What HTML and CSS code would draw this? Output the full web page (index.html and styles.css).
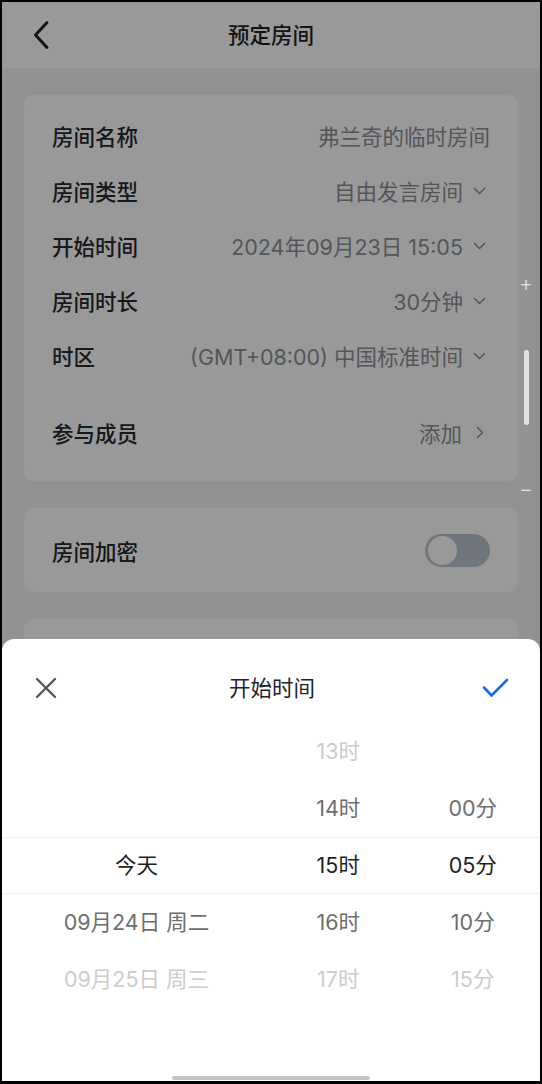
FILE: index.html
```html
<!DOCTYPE html>
<html lang="zh-CN">
<head>
  <meta charset="UTF-8">
  <meta name="viewport" content="width=device-width, initial-scale=1.0">
  <title>预定房间</title>
  <link rel="stylesheet" href="styles.css">
</head>
<body>
<div class="screen">
  <div class="page">
    <div class="nav">
      <svg class="back" width="18" height="30" viewBox="0 0 18 30"><path d="M15 2.5 L3.5 15 L15 27.5" fill="none" stroke="#1f2329" stroke-width="3" stroke-linecap="round" stroke-linejoin="round"/></svg>
      <div class="nav-title">预定房间</div>
    </div>

    <div class="content">
      <div class="card">
        <div class="row">
          <span class="label">房间名称</span>
          <span class="value">弗兰奇的临时房间</span>
        </div>
        <div class="row">
          <span class="label">房间类型</span>
          <span class="value">自由发言房间</span>
          <svg class="down" width="13" height="8" viewBox="0 0 13 8"><path d="M1.5 1.5 L6.5 6.5 L11.5 1.5" fill="none" stroke="#8f9299" stroke-width="1.6" stroke-linecap="round" stroke-linejoin="round"/></svg>
        </div>
        <div class="row">
          <span class="label">开始时间</span>
          <span class="value">2024年09月23日 15:05</span>
          <svg class="down" width="13" height="8" viewBox="0 0 13 8"><path d="M1.5 1.5 L6.5 6.5 L11.5 1.5" fill="none" stroke="#8f9299" stroke-width="1.6" stroke-linecap="round" stroke-linejoin="round"/></svg>
        </div>
        <div class="row">
          <span class="label">房间时长</span>
          <span class="value">30分钟</span>
          <svg class="down" width="13" height="8" viewBox="0 0 13 8"><path d="M1.5 1.5 L6.5 6.5 L11.5 1.5" fill="none" stroke="#8f9299" stroke-width="1.6" stroke-linecap="round" stroke-linejoin="round"/></svg>
        </div>
        <div class="row">
          <span class="label">时区</span>
          <span class="value">(GMT+08:00) 中国标准时间</span>
          <svg class="down" width="13" height="8" viewBox="0 0 13 8"><path d="M1.5 1.5 L6.5 6.5 L11.5 1.5" fill="none" stroke="#8f9299" stroke-width="1.6" stroke-linecap="round" stroke-linejoin="round"/></svg>
        </div>
        <div class="row row-members">
          <span class="label">参与成员</span>
          <span class="value">添加</span>
          <svg class="more" width="8" height="13" viewBox="0 0 8 13"><path d="M1.5 1.5 L6.5 6.5 L1.5 11.5" fill="none" stroke="#8f9299" stroke-width="1.6" stroke-linecap="round" stroke-linejoin="round"/></svg>
        </div>
      </div>

      <div class="card card-single">
        <span class="label">房间加密</span>
        <div class="toggle"><div class="knob"></div></div>
      </div>

      <div class="card card-stub"></div>
    </div>
  </div>

  <div class="mask"></div>

  <div class="scroll-hint">
    <span class="hint-sign">+</span>
    <div class="hint-bar"></div>
    <span class="hint-sign">−</span>
  </div>

  <div class="sheet">
    <div class="sheet-head">
      <svg class="close" width="22" height="22" viewBox="0 0 22 22"><path d="M2 2 L20 20 M20 2 L2 20" fill="none" stroke="#50555e" stroke-width="2.4" stroke-linecap="round"/></svg>
      <div class="sheet-title">开始时间</div>
      <svg class="confirm" width="27" height="20" viewBox="0 0 27 20"><path d="M2 9.5 L9.5 17.5 L25 2" fill="none" stroke="#1c6be6" stroke-width="2.6" stroke-linecap="round" stroke-linejoin="round"/></svg>
    </div>

    <div class="picker">
      <div class="column">
        <div class="item"></div>
        <div class="item"></div>
        <div class="item current">今天</div>
        <div class="item near">09月24日 周二</div>
        <div class="item far">09月25日 周三</div>
      </div>
      <div class="column">
        <div class="item far">13时</div>
        <div class="item near">14时</div>
        <div class="item current">15时</div>
        <div class="item near">16时</div>
        <div class="item far">17时</div>
      </div>
      <div class="column">
        <div class="item"></div>
        <div class="item near">00分</div>
        <div class="item current">05分</div>
        <div class="item near">10分</div>
        <div class="item far">15分</div>
      </div>
    </div>

    <div class="home-bar"></div>
  </div>
</div>
</body>
</html>
```

FILE: styles.css
```css
body {
    margin: 0;
    padding: 0;
    font-family: Inter, "Noto Sans CJK SC", sans-serif;
    background-color: #000;
}

.screen {
    position: relative;
    width: 542px;
    height: 1084px;
    border: solid #000;
    border-width: 2px 2px 3px;
    box-sizing: border-box;
    overflow: hidden;
    background-color: #f3f4f6;
}

/* strona pod spodem */
.nav {
    height: 66px;
    display: flex;
    align-items: center;
    position: relative;
    background-color: #fff;
    padding-left: 30px;
}

.back {
    display: block;
}

.nav-title {
    position: absolute;
    left: 0;
    right: 0;
    top: 16px;
    text-align: center;
    font-size: 21.5px;
    line-height: 34px;
    font-weight: 500;
    color: #1f2329;
    pointer-events: none;
}

.content {
    padding: 27px 22px 0 22px;
}

.card {
    background-color: #fff;
    border-radius: 10px;
    padding: 13px 28px 21px;
    margin-bottom: 27px;
}

.row {
    height: 55px;
    display: flex;
    align-items: center;
}

.row-members {
    margin-top: 22px;
}

.label {
    font-size: 21.5px;
    font-weight: 500;
    color: #262a31;
    flex: 1;
}

.value {
    font-size: 21.5px;
    color: #8c8f96;
}

.down {
    margin-left: 10px;
    margin-right: 4px;
}

.more {
    margin-left: 14px;
    margin-right: 6px;
}

.card-single {
    height: 84px;
    padding: 0 28px;
    box-sizing: border-box;
    display: flex;
    align-items: center;
}

.toggle {
    width: 65px;
    height: 33px;
    border-radius: 17px;
    background-color: #bcc4d1;
    padding: 2px 3px;
    box-sizing: border-box;
}

.knob {
    width: 29px;
    height: 29px;
    border-radius: 50%;
    background-color: #fff;
}

.card-stub {
    height: 120px;
    padding: 0;
}

.mask {
    position: absolute;
    left: 0;
    top: 0;
    right: 0;
    bottom: 0;
    background-color: rgba(0, 0, 0, 0.4);
}

.scroll-hint {
    position: absolute;
    left: 517px;
    top: 276px;
    width: 14px;
    display: flex;
    flex-direction: column;
    align-items: center;
    gap: 58px;
}

.hint-sign {
    height: 14px;
    line-height: 14px;
    font-family: "DejaVu Sans", sans-serif;
    font-size: 15px;
    color: #e4e4e4;
}

.hint-bar {
    width: 5px;
    height: 75px;
    border-radius: 3px;
    background-color: #e2e2e2;
}

/* arkusz wyboru czasu */
.sheet {
    position: absolute;
    left: 0;
    right: 0;
    top: 637px;
    bottom: 0;
    background-color: #fff;
    border-radius: 12px 12px 0 0;
    display: flex;
    flex-direction: column;
}

.sheet-head {
    display: grid;
    grid-template-columns: 1fr auto 1fr;
    align-items: center;
    height: 38px;
    padding: 30px 31px 0 33px;
}

.close {
    justify-self: start;
}

.confirm {
    justify-self: end;
}

.sheet-title {
    font-size: 21.5px;
    line-height: 34px;
    color: #1f2329;
}

.picker {
    position: relative;
    margin-top: 16px;
    display: grid;
    grid-template-columns: 2fr 1fr 1fr;
}

.picker::before {
    content: "";
    position: absolute;
    left: 0;
    right: 0;
    top: 114px;
    height: 57px;
    border-top: 1px solid #efefef;
    border-bottom: 1px solid #efefef;
    box-sizing: border-box;
}

.column {
    display: flex;
    flex-direction: column;
}

.item {
    height: 57px;
    line-height: 57px;
    text-align: center;
    font-size: 21.5px;
    white-space: nowrap;
}

.current {
    color: #1f1f1f;
}

.near {
    color: #6e6e6e;
}

.far {
    color: #cccccc;
}

.home-bar {
    width: 198px;
    height: 4px;
    border-radius: 2px;
    background-color: #c4c4c4;
    margin: auto auto 1px;
}
```
